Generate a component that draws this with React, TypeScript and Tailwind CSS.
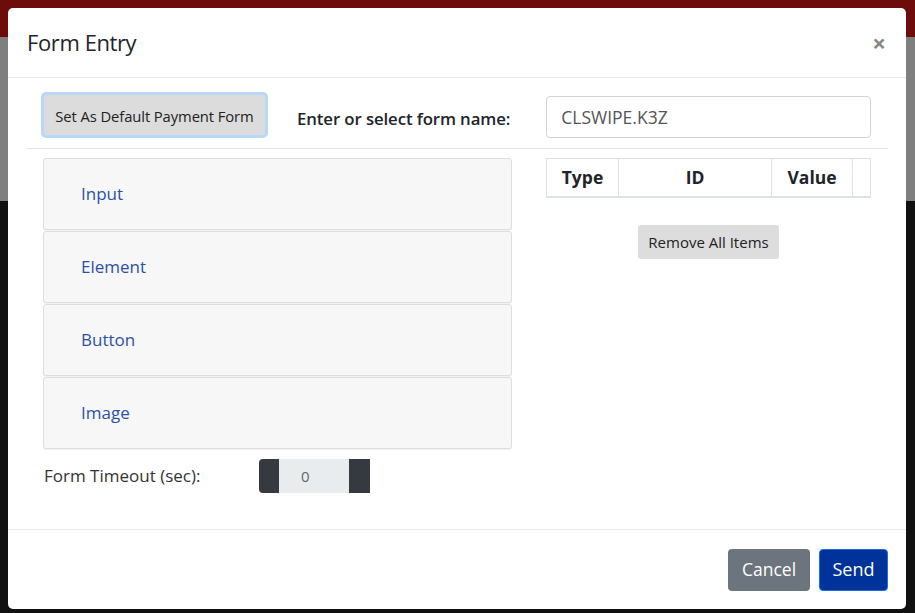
const sections = ["Input", "Element", "Button", "Image"];

export default function App() {
  return (
    <div
      className="relative h-[613px] w-[915px] overflow-hidden bg-[#111111]"
      style={{ fontFamily: '"Open Sans", "Noto Sans", sans-serif' }}
    >
      <div className="h-[37px] bg-[#6e0b0b]" />
      <div className="h-[164px] bg-[#7f7f7f]" />

      <div className="absolute left-[8px] top-[8px] flex h-[601px] w-[898px] flex-col rounded-[5px] bg-white">
        <div className="flex h-[70px] items-center justify-between border-b border-[#e9ecef] pl-[19px] pr-[20px]">
          <h1 className="text-[22px] tracking-[-0.4px] text-[#212529]">Form Entry</h1>
          <span className="text-[24px] font-bold leading-none text-[#888]">×</span>
        </div>

        <div className="flex-1 px-[18px] pt-[14px]">
          <div className="flex h-[57px] items-start border-b border-[#e5e5e5]">
            <button className="ml-[15px] h-[46px] w-[227px] rounded-[5px] border-[3px] border-[#b8d8fa] bg-[#dcdcdc] pt-[3px] text-[14.8px] tracking-[-0.1px] text-[#222]">
              Set As Default Payment Form
            </button>
            <span className="ml-[29px] mt-[14px] text-[16.8px] font-semibold tracking-[-0.1px] text-[#212529]">Enter or select form name:</span>
            <div className="ml-[36px] mt-[4px] flex h-[42px] w-[325px] items-center rounded-[4px] border border-[#ced4da] px-[14px] text-[17.5px] text-[#555]">
              CLSWIPE.K3Z
            </div>
          </div>

          <div className="flex pt-[9px]">
            <div className="ml-[17px] w-[469px]">
              <div className="flex flex-col gap-[1px]">
                {sections.map((s) => (
                  <div
                    key={s}
                    className="flex h-[72px] items-center rounded-[3px] border border-[#dedede] bg-[#f7f7f7] pl-[37px] text-[17px] text-[#2d50a7] shadow-[0_1px_1px_rgba(0,0,0,0.06)]"
                  >
                    {s}
                  </div>
                ))}
              </div>
              <div className="mt-[10px] flex items-center">
                <span className="ml-[1px] w-[215px] text-[17px] text-[#333]">Form Timeout (sec):</span>
                <div className="flex h-[34px] w-[111px]">
                  <div className="w-[20px] rounded-l-[4px] bg-[#343a40]" />
                  <div className="flex flex-1 items-center bg-[#e9ecef] pl-[22px] text-[15px] text-[#666]">0</div>
                  <div className="w-[21px] bg-[#343a40]" />
                </div>
              </div>
            </div>

            <div className="ml-[34px] w-[325px]">
              <div className="flex h-[40px] border border-b-[2px] border-[#dee2e6] text-[17.5px] font-bold text-[#212529]">
                <div className="flex w-[72px] items-center justify-center border-r border-[#dee2e6]">Type</div>
                <div className="flex w-[153px] items-center justify-center border-r border-[#dee2e6]">ID</div>
                <div className="flex w-[81px] items-center justify-center border-r border-[#dee2e6]">Value</div>
                <div className="flex-1" />
              </div>
              <div className="mt-[27px] flex justify-center">
                <button className="h-[34px] w-[141px] rounded-[3px] bg-[#dddddd] text-[15px] text-[#222]">
                  Remove All Items
                </button>
              </div>
            </div>
          </div>
        </div>

        <div className="flex h-[80px] items-center justify-end gap-[9px] border-t border-[#e9ecef] pr-[18px]">
          <button className="h-[42px] w-[82px] rounded-[4px] bg-[#6c757d] text-[17.5px] text-white">Cancel</button>
          <button className="h-[42px] w-[69px] rounded-[4px] border border-[#1a6ee6] bg-[#00339a] text-[18px] text-white">Send</button>
        </div>
      </div>
    </div>
  );
}
